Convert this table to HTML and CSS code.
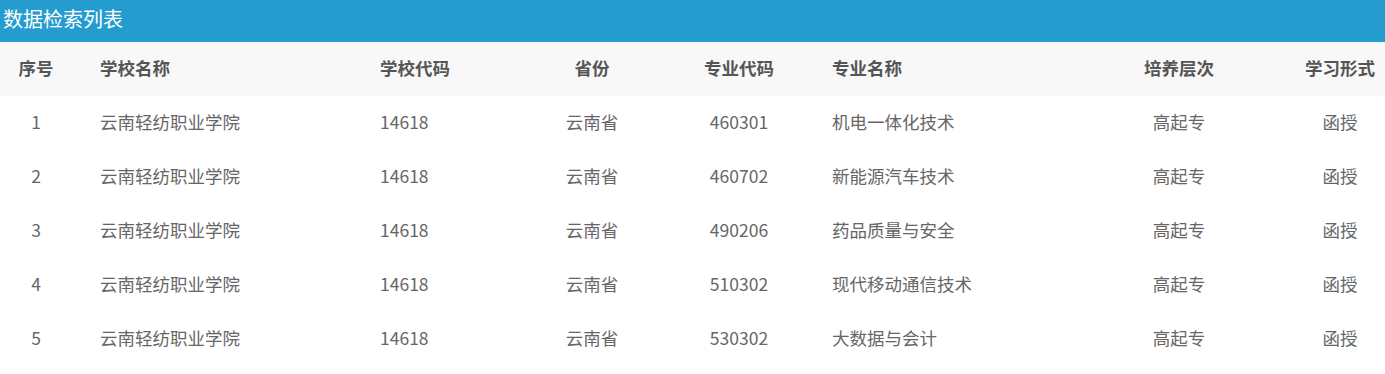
FILE: index.html
```html
<!DOCTYPE html>
<html lang="zh">
<head>
<meta charset="utf-8">
<link rel="stylesheet" href="styles.css">
</head>
<body>
<div class="title">数据检索列表</div>
<div class="table">
  <div class="row head">
    <div class="c1">序号</div><div class="c2">学校名称</div><div class="c3">学校代码</div><div class="c4">省份</div><div class="c5">专业代码</div><div class="c6">专业名称</div><div class="c7">培养层次</div><div class="c8">学习形式</div>
  </div>
  <div class="row">
    <div class="c1">1</div><div class="c2">云南轻纺职业学院</div><div class="c3">14618</div><div class="c4">云南省</div><div class="c5">460301</div><div class="c6">机电一体化技术</div><div class="c7">高起专</div><div class="c8">函授</div>
  </div>
  <div class="row">
    <div class="c1">2</div><div class="c2">云南轻纺职业学院</div><div class="c3">14618</div><div class="c4">云南省</div><div class="c5">460702</div><div class="c6">新能源汽车技术</div><div class="c7">高起专</div><div class="c8">函授</div>
  </div>
  <div class="row">
    <div class="c1">3</div><div class="c2">云南轻纺职业学院</div><div class="c3">14618</div><div class="c4">云南省</div><div class="c5">490206</div><div class="c6">药品质量与安全</div><div class="c7">高起专</div><div class="c8">函授</div>
  </div>
  <div class="row">
    <div class="c1">4</div><div class="c2">云南轻纺职业学院</div><div class="c3">14618</div><div class="c4">云南省</div><div class="c5">510302</div><div class="c6">现代移动通信技术</div><div class="c7">高起专</div><div class="c8">函授</div>
  </div>
  <div class="row">
    <div class="c1">5</div><div class="c2">云南轻纺职业学院</div><div class="c3">14618</div><div class="c4">云南省</div><div class="c5">530302</div><div class="c6">大数据与会计</div><div class="c7">高起专</div><div class="c8">函授</div>
  </div>
</div>
</body>
</html>
```
FILE: styles.css
```css
html, body {
  margin: 0;
  padding: 0;
  background: #ffffff;
  font-family: "Noto Sans CJK SC", "Noto Sans", sans-serif;
}
.title {
  height: 42px;
  line-height: 38px;
  background: #259ccf;
  color: #ffffff;
  font-size: 20px;
  padding-left: 3px;
}
.table {
  width: 1385px;
}
.row {
  display: grid;
  grid-template-columns: 72px 280px 148px 184px 110px 300px 170px 121px;
  box-sizing: border-box;
  height: 54px;
  padding-bottom: 3px;
  align-items: center;
  font-size: 17.5px;
  color: #666666;
}
.row.head {
  background: #f8f8f8;
  font-weight: bold;
  color: #555555;
}
.c1, .c4, .c5, .c7, .c8 { text-align: center; }
.c2, .c3 { padding-left: 28px; }
.c6 { padding-left: 38px; }
.c8 { padding-left: 31px; }
```
